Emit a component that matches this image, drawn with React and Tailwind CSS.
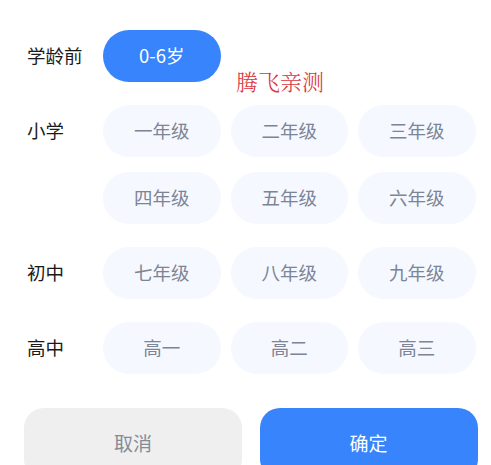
import React from "react";

const font = { fontFamily: '"Noto Sans CJK SC", "Noto Sans", sans-serif' };

function Pill({ children, active }) {
  return (
    <div
      className={
        "h-[52px] w-[117.5px] rounded-full flex items-center justify-center text-[18.5px] " +
        (active ? "bg-[#3784fc] text-white" : "bg-[#f5f8ff] text-[#7c8495]")
      }
    >
      {children}
    </div>
  );
}

function Section({ label, items, active }) {
  return (
    <div className="flex items-start">
      <div className="w-[76px] h-[52px] flex items-center text-[18.5px] text-[#1a1a1a]">{label}</div>
      <div className="grid grid-cols-[117.5px_117.5px_117.5px] gap-x-[10px] gap-y-[15px]">
        {items.map((t) => (
          <Pill key={t} active={active}>
            {t}
          </Pill>
        ))}
      </div>
    </div>
  );
}

export default function App() {
  return (
    <div className="relative w-[491px] h-[465px] bg-white overflow-hidden" style={font}>
      <div className="flex flex-col gap-[23px] pt-[30px] pl-[27px]">
        <Section label="学龄前" items={["0-6岁"]} active />
        <Section label="小学" items={["一年级", "二年级", "三年级", "四年级", "五年级", "六年级"]} />
        <Section label="初中" items={["七年级", "八年级", "九年级"]} />
        <Section label="高中" items={["高一", "高二", "高三"]} />
      </div>
      <div className="flex gap-[17.5px] pl-[24px] mt-[33.5px]">
        <div className="w-[218px] h-[71px] rounded-[20px] bg-[#efefef] text-[#858b96] text-[19px] flex items-center justify-center">
          取消
        </div>
        <div className="w-[218px] h-[71px] rounded-[20px] bg-[#3784fc] text-white text-[19px] flex items-center justify-center">
          确定
        </div>
      </div>
      <div
        className="absolute left-[236px] top-[67px] text-[22px] font-light text-[#d8363e] leading-[28px]"
        style={{ fontFamily: '"Noto Serif CJK SC", "Noto Sans CJK SC", serif' }}
      >
        腾飞亲测
      </div>
    </div>
  );
}
